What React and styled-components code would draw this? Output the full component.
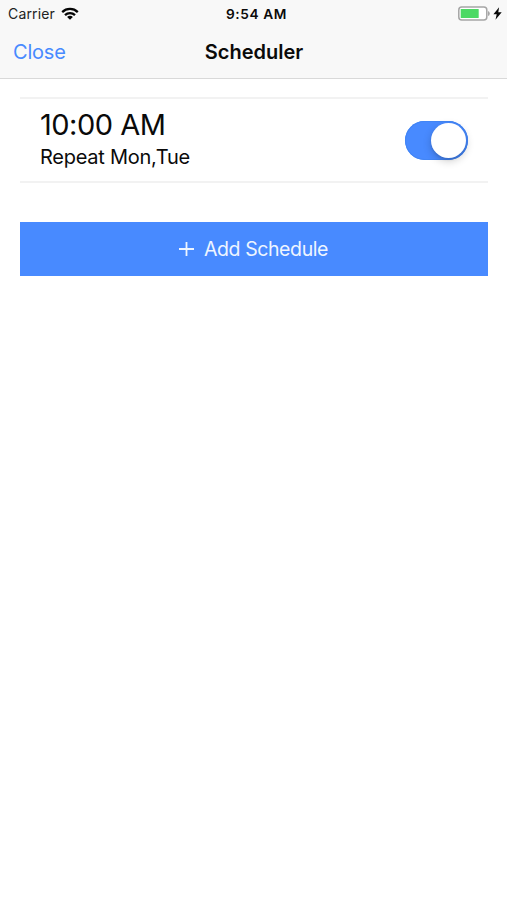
import React from "react";
import styled, { createGlobalStyle } from "styled-components";

const GlobalStyle = createGlobalStyle`
  * { box-sizing: border-box; }
  body { margin: 0; background: #fff; }
`;

const Screen = styled.div`
  display: flex;
  flex-direction: column;
  width: 100%;
  min-height: 900px;
  background: #fff;
  color: #0a0a0a;
  font-family: Inter, "Liberation Sans", sans-serif;
`;

const Header = styled.header`
  height: 79px;
  background: #f8f8f8;
  border-bottom: 1px solid #d9d9d9;
`;

const Bar = styled.div`
  display: grid;
  grid-template-columns: 1fr auto 1fr;
  align-items: center;
  height: ${(p) => p.$height}px;
  padding: ${(p) => p.$padding};
`;

const Label = styled.span`
  display: block;
  white-space: nowrap;
  font-size: ${(p) => p.$size}px;
  line-height: ${(p) => p.$line || 24}px;
  font-weight: ${(p) => p.$weight || 400};
  letter-spacing: ${(p) => p.$spacing || 0}px;
`;

const Network = styled.div`
  display: flex;
  align-items: center;
  gap: 6px;
  color: #222;
`;

const Power = styled.div`
  display: flex;
  align-items: center;
  justify-content: flex-end;
  gap: 3px;
  padding-right: 3px;
`;

const CloseButton = styled.button`
  justify-self: start;
  padding: 0;
  border: 0;
  background: none;
  color: #488aff;
  font-family: inherit;
`;

const Content = styled.main`
  display: flex;
  flex-direction: column;
  gap: 39px;
  padding: 18px 19px 0 20px;
`;

const ScheduleItem = styled.section`
  display: flex;
  justify-content: space-between;
  align-items: center;
  height: 86px;
  padding: 0 20px;
  border: solid #f2f2f2;
  border-width: 2px 0;
`;

const Details = styled.div`
  display: flex;
  flex-direction: column;
`;

const Switch = styled.button`
  display: flex;
  justify-content: flex-end;
  align-items: center;
  width: 63px;
  height: 39px;
  padding: 0 2px;
  border: 0;
  border-radius: 20px;
  background: #488aff;
  box-shadow: inset 0 0 0 1px #4285f5;
`;

const Knob = styled.span`
  width: 35px;
  height: 35px;
  border-radius: 50%;
  background: #fff;
  box-shadow: 0 3px 9px rgba(0, 0, 0, 0.2), 0 2px 2px rgba(0, 0, 0, 0.08);
`;

const AddButton = styled.button`
  display: flex;
  align-items: center;
  justify-content: center;
  gap: 10px;
  height: 54px;
  padding: 0 1px 0 0;
  border: 0;
  background: #488aff;
  color: #eef5ff;
  font-family: inherit;
`;

const WifiIcon = () => (
  <svg width="18" height="14" viewBox="0 0 18 14" fill="none" stroke="#050505" strokeWidth="2.3">
    <path d="M1.2 5.1C5.6 .9 12.4 .9 16.8 5.1" />
    <path d="M4 8.1C6.8 5.4 11.2 5.4 14 8.1" />
    <path d="M9 12.8 6.1 9.9C7.8 8.4 10.2 8.4 11.9 9.9Z" fill="#050505" stroke="none" />
  </svg>
);

const BatteryIcon = () => (
  <svg width="32" height="15" viewBox="0 0 32 15">
    <rect x=".8" y="1" width="28" height="13" rx="3" fill="#fff" stroke="#a5a5a5" strokeWidth="1.5" />
    <rect x="2.7" y="3" width="18" height="9" rx=".5" fill="#4cd964" />
    <path d="M30 5Q31.8 5.5 31.8 7.5T30 10Z" fill="#a5a5a5" />
  </svg>
);

const BoltIcon = () => (
  <svg width="9" height="13" viewBox="0 0 9 13">
    <path d="M6.1 .2.4 7.2H3.7L2.5 12.8 8.7 5.2H5.3Z" fill="#080808" />
  </svg>
);

const PlusIcon = () => (
  <svg width="15" height="15" viewBox="0 0 15 15">
    <path d="M7.5 0V14M0 7H15" stroke="#eef5ff" strokeWidth="1.8" />
  </svg>
);

export default function App() {
  return (
    <Screen>
      <GlobalStyle />
      <Header>
        <Bar $height={27} $padding="0 2px 0 8px">
          <Network>
            <Label $size={14} $spacing={0.15}>Carrier</Label>
            <WifiIcon />
          </Network>
          <Label $size={13.7} $weight={600} $spacing={0.6}>9:54 AM</Label>
          <Power>
            <BatteryIcon />
            <BoltIcon />
          </Power>
        </Bar>
        <Bar $height={50} $padding="0 12px 0 13px">
          <CloseButton><Label $size={20} $spacing={-0.2}>Close</Label></CloseButton>
          <Label $size={20} $weight={600}>Scheduler</Label>
        </Bar>
      </Header>
      <Content>
        <ScheduleItem>
          <Details>
            <Label $size={29} $line={34} $spacing={-0.5}>10:00 AM</Label>
            <Label $size={20} $line={30} $spacing={-0.26}>Repeat Mon,Tue</Label>
          </Details>
          <Switch role="switch" aria-checked="true" aria-label="Schedule enabled"><Knob /></Switch>
        </ScheduleItem>
        <AddButton>
          <PlusIcon />
          <Label $size={19.5} $line={26} $spacing={-0.4}>Add Schedule</Label>
        </AddButton>
      </Content>
    </Screen>
  );
}
